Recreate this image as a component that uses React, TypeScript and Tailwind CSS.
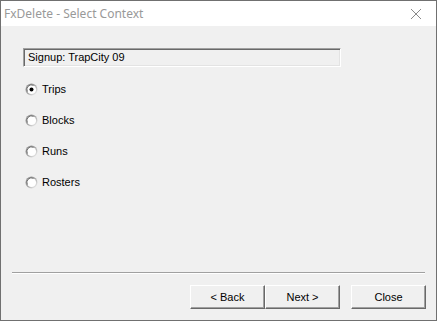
import { useState } from "react";

const options = ["Trips", "Blocks", "Runs", "Rosters"];

function RadioDot({ checked }: { checked: boolean }) {
  return (
    <svg width="13" height="13" viewBox="0 0 13 13" className="shrink-0">
      <defs>
        <linearGradient id="rim" x1="0" y1="0" x2="1" y2="1">
          <stop offset="0" stopColor="#8a8a8a" />
          <stop offset="0.5" stopColor="#a8a8a8" />
          <stop offset="1" stopColor="#ffffff" />
        </linearGradient>
      </defs>
      <circle cx="6.5" cy="6.5" r="6" fill="url(#rim)" />
      <circle cx="6.5" cy="6.5" r="4.6" fill="#ffffff" />
      <path d="M2.4 8.6 A4.6 4.6 0 0 1 8.6 2.4" fill="none" stroke="#6a6a6a" strokeWidth="0.9" />
      {checked && <circle cx="6.5" cy="6.5" r="2" fill="#000000" />}
    </svg>
  );
}

function WinButton({ label }: { label: string }) {
  return (
    <button className="h-[24px] w-[75px] bg-[#f0f0f0] border border-t-white border-l-white border-r-[#696969] border-b-[#696969] shadow-[inset_-1px_-1px_0_#a0a0a0] text-[11px] text-black leading-none">
      {label}
    </button>
  );
}

export default function App() {
  const [selected, setSelected] = useState("Trips");

  return (
    <div
      className="w-[437px] h-[321px] flex flex-col border border-[#707070] bg-[#f0f0f0] overflow-hidden"
      style={{ fontFamily: '"Liberation Sans", Arial, sans-serif' }}
    >
      <div className="h-[25px] shrink-0 bg-white flex items-center justify-between pl-[3px] pr-[14px]">
        <span
          className="text-[12px] text-[#999999]"
          style={{ fontFamily: '"Noto Sans", "Open Sans", sans-serif' }}
        >
          FxDelete - Select Context
        </span>
        <svg width="12" height="12" viewBox="0 0 12 12">
          <path d="M1 1 L11 11 M11 1 L1 11" stroke="#8a8a8a" strokeWidth="1" />
        </svg>
      </div>

      <div className="flex-1 flex flex-col pt-[22px]">
        <div className="ml-[22px] w-[318px] h-[19px] border border-t-[#a0a0a0] border-l-[#a0a0a0] border-b-white border-r-white shadow-[inset_1px_1px_0_#696969,inset_-1px_-1px_0_#e3e3e3] flex items-center pl-[4px] text-[11px] text-black">
          Signup: TrapCity 09
        </div>

        <div className="mt-[14px] ml-[24px] flex flex-col gap-[14px]">
          {options.map((o) => (
            <label key={o} className="h-[17px] flex items-center gap-[4px] text-[11px] text-black cursor-default" onClick={() => setSelected(o)}>
              <RadioDot checked={selected === o} />
              <span>{o}</span>
            </label>
          ))}
        </div>

        <div className="mt-auto mx-[11px] h-[2px] border-t border-t-[#a0a0a0] border-b border-b-white" />

        <div className="h-[11px] shrink-0" />
        <div className="flex justify-end pr-[10px]">
          <WinButton label="< Back" />
          <WinButton label="Next >" />
          <div className="w-[11px]" />
          <WinButton label="Close" />
        </div>
        <div className="h-[11px] shrink-0" />
      </div>
    </div>
  );
}
